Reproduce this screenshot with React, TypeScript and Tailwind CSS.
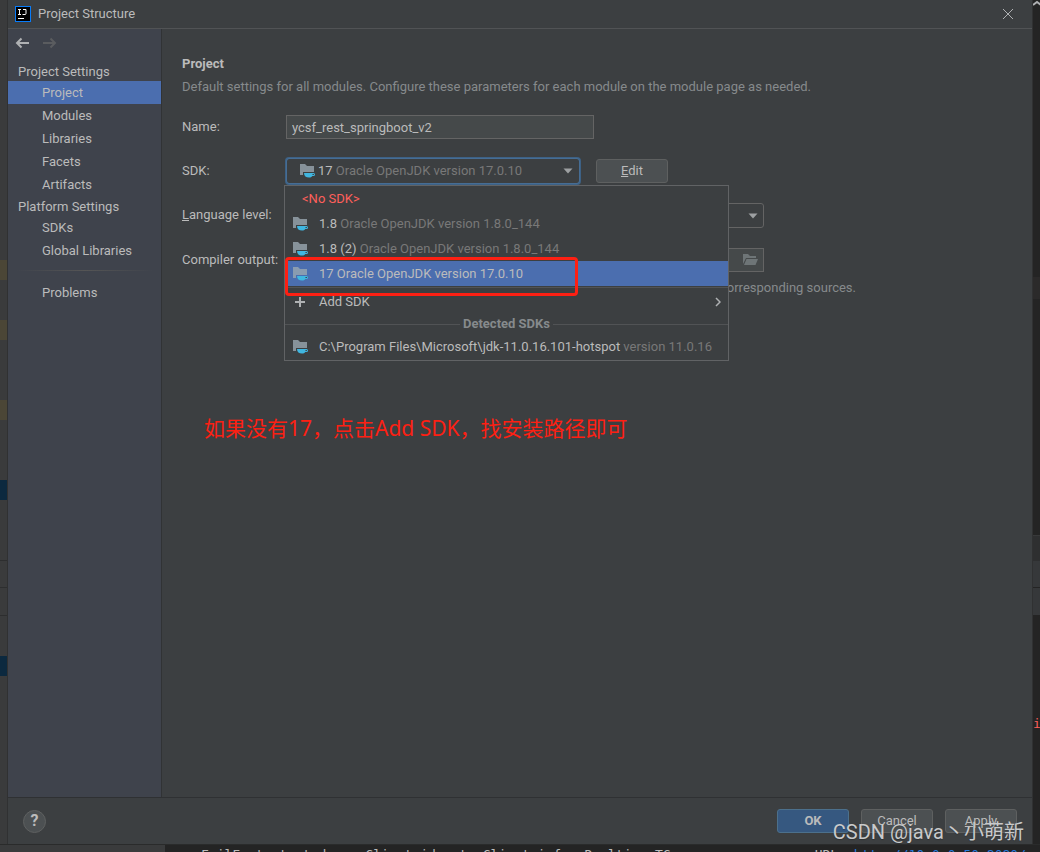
import { useState } from 'react'

const LEFT_BANDS = [
  { gap: 'h-[260px]', band: 'h-5 bg-[#4b4636]' },
  { gap: 'h-10', band: 'h-5 bg-[#4b4636]' },
  { gap: 'h-[60px]', band: 'h-5 bg-[#4b4636]' },
  { gap: 'h-[60px]', band: 'h-5 bg-[#0c293f]' },
  { gap: 'h-[60px]', band: 'h-px bg-[#2d2e2f]' },
  { gap: 'h-[26px]', band: 'h-px bg-[#2d2e2f]' },
  { gap: 'h-[27px]', band: 'h-px bg-[#2d2e2f]' },
  { gap: 'h-10', band: 'h-5 bg-[#0c293f]' },
]

const RIGHT_BANDS = [
  { gap: 'h-[256px]', band: 'h-[22px] bg-[#2b2a2a]' },
  { gap: 'h-[236px]', band: 'h-[26px] border-t border-[#38393a] bg-[#2e2f30]' },
  { gap: 'h-0', band: 'h-[26px] bg-[#36383a]' },
  { gap: 'h-px', band: 'h-[27px] bg-[#36383a]' },
]

const NAV_GROUPS = [
  { title: 'Project Settings', items: ['Project', 'Modules', 'Libraries', 'Facets', 'Artifacts'] },
  { title: 'Platform Settings', items: ['SDKs', 'Global Libraries'] },
]

const SDKS = [
  { name: '1.8', version: 'Oracle OpenJDK version 1.8.0_144' },
  { name: '1.8 (2)', version: 'Oracle OpenJDK version 1.8.0_144' },
  { name: '17', version: 'Oracle OpenJDK version 17.0.10' },
]

function SdkIcon() {
  return (
    <svg className="shrink-0" width="16" height="16" viewBox="0 0 16 16" aria-hidden="true">
      <path d="M1 1h5l2 2h7v6H4v3H1z" fill="#9aa7b0" fillOpacity="0.8" />
      <path d="M5 10h9.5a1.5 1.5 0 0 1 0 3h-1.2c-.8 1-1.8 1.6-3.3 1.6-3 0-5-1.6-5-4.6z" fill="#40b6e0" />
      <path d="M13.5 11v1h1a.5.5 0 0 0 0-1z" fill="#3c3f41" />
    </svg>
  )
}

function CaretDown() {
  return (
    <svg className="shrink-0" width="10" height="6" viewBox="0 0 10 6" aria-hidden="true">
      <path d="M0.5 0.5h9L5 5.5z" fill="#9da0a2" />
    </svg>
  )
}

function NavItem({ label, active, onSelect }: { label: string; active: boolean; onSelect: () => void }) {
  return (
    <li>
      <button
        type="button"
        onClick={onSelect}
        aria-current={active ? 'page' : undefined}
        className={`block h-[23px] w-full pl-[34px] text-left ${active ? 'bg-[#4b6eaf]' : ''}`}
      >
        {label}
      </button>
    </li>
  )
}

function Sidebar() {
  const [page, setPage] = useState('Project')

  return (
    <nav className="w-[154px] shrink-0 border-r border-[#313335] bg-[#3f434c]">
      <div className="flex h-8 items-center gap-3 px-[7px] pb-1">
        <button type="button" aria-label="Back">
          <svg width="15" height="12" viewBox="0 0 15 12" fill="none" stroke="#afb1b3" strokeWidth="2">
            <path d="M14 6H2M6.5 1.5L2 6l4.5 4.5" />
          </svg>
        </button>
        <button type="button" aria-label="Forward" disabled>
          <svg width="15" height="12" viewBox="0 0 15 12" fill="none" stroke="#5a5c5f" strokeWidth="2">
            <path d="M1 6h12M8.5 1.5L13 6l-4.5 4.5" />
          </svg>
        </button>
      </div>
      {NAV_GROUPS.map((group) => (
        <section key={group.title}>
          <h2 className="h-5 pl-[10px] leading-[22px]">{group.title}</h2>
          <ul className="leading-[23px]">
            {group.items.map((item) => (
              <NavItem key={item} label={item} active={item === page} onSelect={() => setPage(item)} />
            ))}
          </ul>
        </section>
      ))}
      <div className="mx-2 mt-2 mb-[10px] h-px bg-gradient-to-r from-transparent via-[#555555] to-transparent" />
      <ul className="leading-[23px]">
        <NavItem label="Problems" active={page === 'Problems'} onSelect={() => setPage('Problems')} />
      </ul>
    </nav>
  )
}

function SdkPopup({ selected, onSelect }: { selected: string; onSelect: (name: string) => void }) {
  return (
    <div className="absolute top-[28px] -left-px z-10 w-[445px] border border-[#616365] bg-[#3c3f41]">
      <ul role="listbox" aria-label="SDK" className="leading-[25px]">
        <li role="option" aria-selected={false} className="h-[25px] pl-[17px] text-[#ff5f5b]">&lt;No SDK&gt;</li>
        {SDKS.map((sdk) => {
          const active = sdk.name === selected
          return (
            <li
              key={sdk.name}
              role="option"
              aria-selected={active}
              onClick={() => onSelect(sdk.name)}
              className={`flex h-[25px] items-center gap-[11px] pl-[7px] ${active ? 'bg-[#4b6eaf]' : ''}`}
            >
              <SdkIcon />
              <span>
                {sdk.name} <span className={active ? '' : 'text-[#787878]'}>{sdk.version}</span>
              </span>
            </li>
          )
        })}
      </ul>
      <div className="mt-px h-px bg-[#515355]" />
      <button type="button" className="flex h-[27px] w-full items-center gap-[13px] pr-[7px] pl-[9px]">
        <svg width="12" height="12" viewBox="0 0 12 12" stroke="#afb1b3" strokeWidth="2" aria-hidden="true">
          <path d="M6 1v10M1 6h10" />
        </svg>
        <span>Add SDK</span>
        <svg className="ml-auto" width="6" height="10" viewBox="0 0 6 10" fill="none" stroke="#afb1b3" strokeWidth="1.5" aria-hidden="true">
          <path d="M1 1l4 4-4 4" />
        </svg>
      </button>
      <div className="flex h-[18px] items-center gap-[3px] font-bold text-[#868a8c]">
        <span className="h-px flex-1 bg-[#515355]" />
        Detected SDKs
        <span className="h-px flex-1 bg-[#515355]" />
      </div>
      <button type="button" className="flex h-[27px] w-full items-center gap-[11px] pl-[7px] whitespace-nowrap">
        <SdkIcon />
        <span>
          C:\Program Files\Microsoft\jdk-11.0.16.101-hotspot <span className="text-[#787878]">version 11.0.16</span>
        </span>
      </button>
      {/* Red marker round the chosen SDK */}
      <div aria-hidden className="pointer-events-none absolute top-[71px] left-0 h-[39px] w-[293px] rounded-sm border-3 border-[#fd2013]" />
    </div>
  )
}

function ProjectForm() {
  const [name, setName] = useState('ycsf_rest_springboot_v2')
  const [sdk, setSdk] = useState('17')
  const [open, setOpen] = useState(true)
  const current = SDKS.find((s) => s.name === sdk) ?? SDKS[0]

  return (
    <main className="min-w-0 flex-1 px-5 pt-[25px]">
      <h1 className="leading-5 font-bold">Project</h1>
      <p className="mt-[3px] leading-5 text-[#868a8c]">
        Default settings for all modules. Configure these parameters for each module on the module page as needed.
      </p>

      <form className="mt-[7px] grid grid-cols-[104px_1fr] items-center" onSubmit={(e) => e.preventDefault()}>
        <label htmlFor="name">Name:</label>
        <div className="flex h-[46px] items-center">
          <input
            id="name"
            value={name}
            onChange={(e) => setName(e.target.value)}
            className="h-6 w-[308px] border border-[#646464] bg-[#45494a] px-[5px] outline-none"
          />
        </div>

        <label htmlFor="sdk">SDK:</label>
        <div className="flex h-[42px] items-center">
          <div className="relative -ml-px w-[296px]">
            <button
              id="sdk"
              type="button"
              aria-haspopup="listbox"
              aria-expanded={open}
              onClick={() => setOpen(!open)}
              className="flex h-7 w-full items-center gap-[3px] rounded border-2 border-[#3d6185] px-3 outline-1 -outline-offset-2 outline-[#466d94]"
            >
              <SdkIcon />
              <span>
                {current.name} <span className="text-[#787878]">{current.version}</span>
              </span>
              <span className="ml-auto -mr-[6px]">
                <CaretDown />
              </span>
            </button>
            {open && (
              <SdkPopup
                selected={sdk}
                onSelect={(next) => {
                  setSdk(next)
                  setOpen(false)
                }}
              />
            )}
          </div>
          <button type="button" className="ml-[15px] h-6 w-[72px] rounded-[3px] border border-[#5e6060] bg-[#4c5052]">
            <u>E</u>dit
          </button>
        </div>

        <label htmlFor="level">
          <u>L</u>anguage level:
        </label>
        <div className="flex h-[46px] items-center">
          <div className="relative w-[478px]">
            <select
              id="level"
              className="h-[25px] w-full appearance-none rounded-[3px] border border-[#646464] bg-[#3c3f41] px-2 outline-none"
            >
              <option>SDK default</option>
            </select>
            <span className="pointer-events-none absolute top-[10px] right-[6px]">
              <CaretDown />
            </span>
          </div>
        </div>

        <label htmlFor="output" className="whitespace-nowrap">Compiler output:</label>
        <div className="flex h-11 items-center">
          <input id="output" className="h-6 w-[450px] border border-r-0 border-[#646464] bg-[#45494a] px-[5px] outline-none" />
          <button
            type="button"
            aria-label="Browse"
            className="flex h-6 w-7 items-center justify-center border border-l-0 border-[#646464] bg-[#45494a]"
          >
            <svg width="16" height="14" viewBox="0 0 16 14" fill="#6e7577" aria-hidden="true">
              <path d="M1 1h5l2 2h6v2H4L1 11z" />
              <path d="M4.5 6H16l-2.5 6H2z" />
            </svg>
          </button>
        </div>

        <p className="col-start-2 w-[570px] text-right leading-3 text-[#868a8c]">
          Used for module subdirectories, Production and Test directories for the corresponding sources.
        </p>
      </form>
    </main>
  )
}

const BUTTON = 'h-6 w-[72px] rounded-[3px] border'

export default function App() {
  return (
    <div className="relative flex min-h-screen flex-col overflow-hidden bg-[#242424] font-[Roboto,'Noto_Sans_CJK_SC',sans-serif] text-[13px] text-[#bbbbbb]">
      <div className="flex flex-1">
        <div aria-hidden className="w-2 shrink-0 border-r border-[#303132] bg-[#3a3b3c]">
          {LEFT_BANDS.map((b, i) => (
            <div key={i}>
              <div className={b.gap} />
              <div className={b.band} />
            </div>
          ))}
        </div>

        <div role="dialog" aria-label="Project Structure" className="flex min-w-0 flex-1 flex-col bg-[#3c3f41]">
          <header className="flex h-[29px] shrink-0 items-center border-b border-[#515355] pr-[18px] pl-[7px]">
            <svg width="16" height="16" viewBox="0 0 16 16" aria-hidden="true">
              <rect x="0.5" y="0.5" width="15" height="15" fill="#000000" stroke="#087cfa" />
              <path d="M3 3.5h3M4.5 3.5v5M3 8.5h3M8 3.5h3v4q0 1-1 1H7.5M3 12.5h6" fill="none" stroke="#ffffff" />
            </svg>
            <span className="ml-[7px]">Project Structure</span>
            <button type="button" aria-label="Close" className="ml-auto">
              <svg width="12" height="12" viewBox="0 0 12 12" stroke="#afb1b3" aria-hidden="true">
                <path d="M1 1l10 10M11 1L1 11" />
              </svg>
            </button>
          </header>

          <div className="flex flex-1">
            <Sidebar />
            <ProjectForm />
          </div>

          <footer className="flex h-[47px] shrink-0 items-center border-t border-[#2f3133] px-[15px]">
            <button
              type="button"
              aria-label="Help"
              className="size-[23px] rounded-full border border-[#5e6060] bg-[#4c5052] text-base leading-5 font-bold"
            >
              ?
            </button>
            <div className="ml-auto flex gap-3">
              <button type="button" className={`${BUTTON} border-[#4c708c] bg-[#365880] font-bold`}>OK</button>
              <button type="button" className={`${BUTTON} border-[#5e6060] bg-[#4c5052]`}>Cancel</button>
              <button type="button" className={`${BUTTON} border-[#5e6060] bg-[#4c5052]`}>
                <u>A</u>pply
              </button>
            </div>
          </footer>
        </div>

        <div aria-hidden className="w-2 shrink-0 overflow-hidden border-l border-[#303132]">
          <svg className="h-[21px]" width="8" height="21" viewBox="0 0 8 21" fill="none" stroke="#afb1b3" strokeWidth="2">
            <path d="M0 5l4-3 4 3" />
          </svg>
          {RIGHT_BANDS.map((b, i) => (
            <div key={i}>
              <div className={b.gap} />
              <div className={b.band} />
            </div>
          ))}
          <div className="mt-[101px] font-['DejaVu_Sans_Mono',monospace] leading-4 text-[#ff5f5b]">i</div>
        </div>
      </div>

      {/* Editor and console showing under the dialog */}
      <div aria-hidden className="flex h-2 overflow-hidden border-t border-[#2a2b2b] font-['DejaVu_Sans_Mono',monospace] leading-4 whitespace-pre">
        <div className="w-[165px] shrink-0 bg-[#3a3b3c]" />
        <div className="flex flex-1 pt-[2px] pr-[14px] pl-9">
          <span>FailFast started: no Client id set. Client info: Realtime TC</span>
          <span className="ml-auto">
            URL: <span className="text-[#287bde]">http://10.0.0.50:8080/</span>
          </span>
        </div>
      </div>

      <p className="absolute top-[412px] left-[204px] font-['Noto_Sans','Noto_Sans_CJK_SC',sans-serif] text-[21px] leading-8 whitespace-nowrap text-[#fd2013]">
        如果没有17，点击Add SDK，找安装路径即可
      </p>
      <p className="absolute right-4 bottom-1 text-xl leading-8 whitespace-nowrap text-[#c9cacb] text-shadow-xs">
        CSDN @java丶小萌新
      </p>
    </div>
  )
}
